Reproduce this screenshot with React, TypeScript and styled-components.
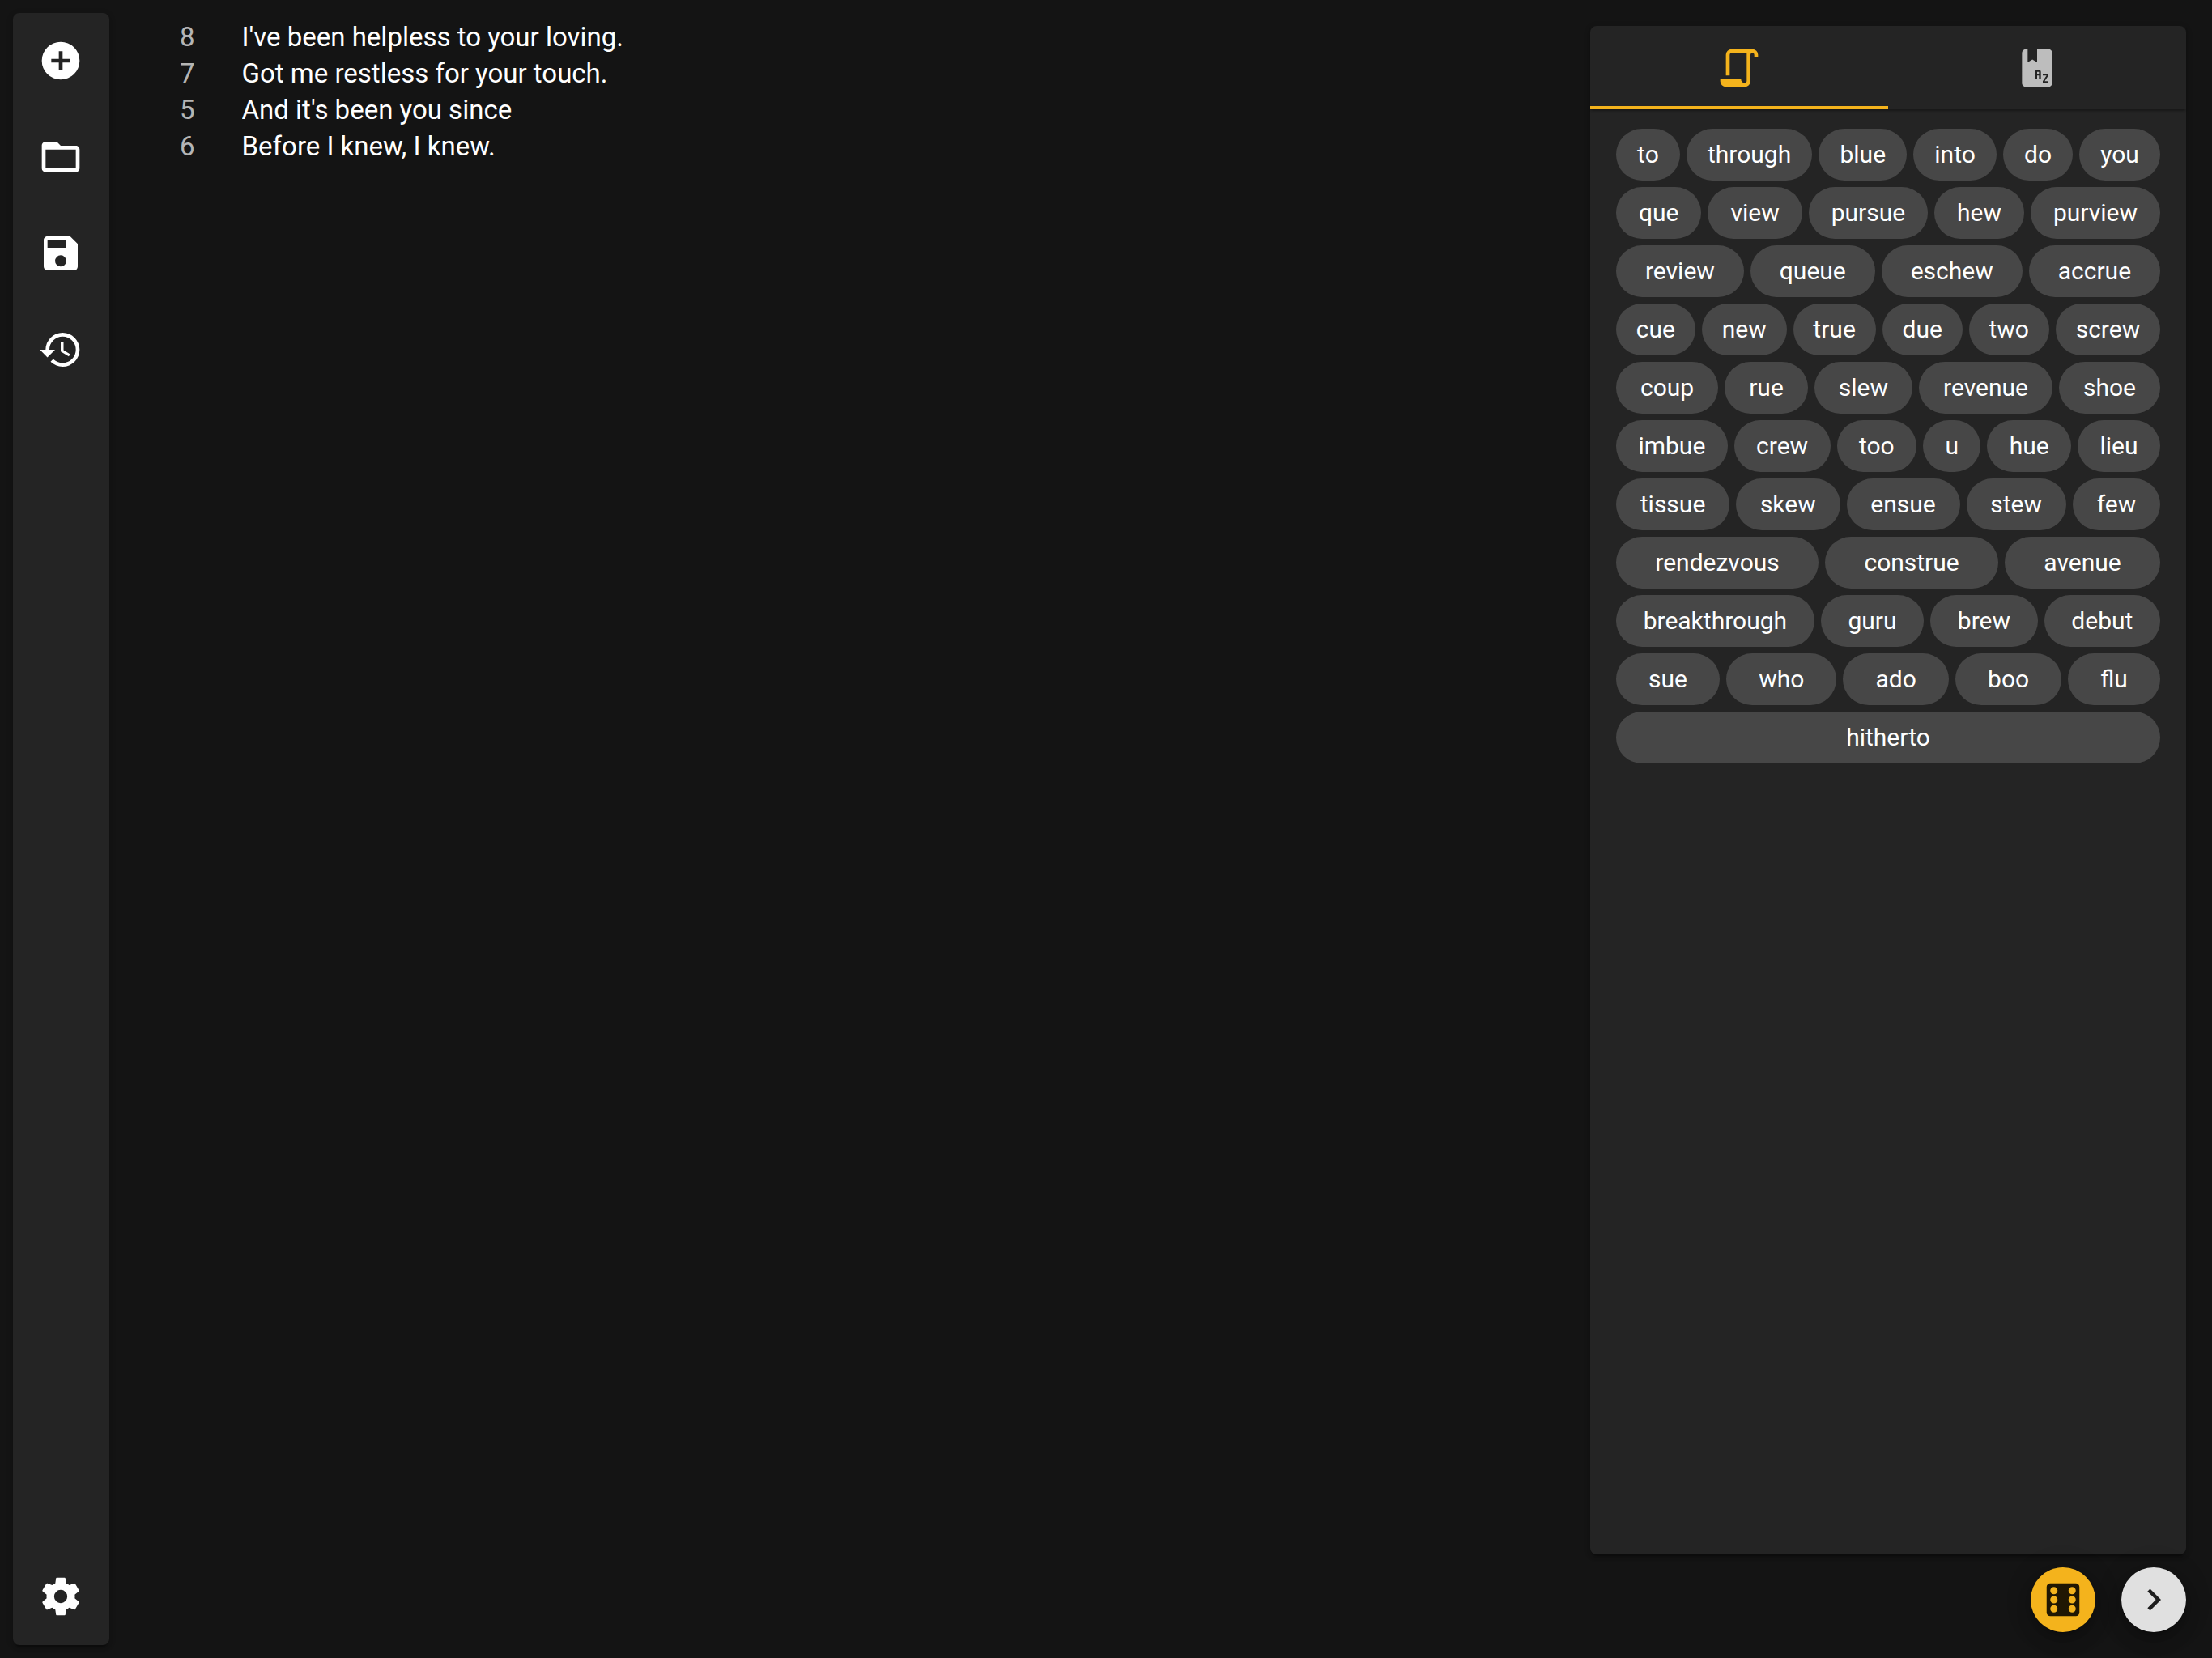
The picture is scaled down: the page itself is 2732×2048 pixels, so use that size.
import React, { useState } from "react";
import styled, { createGlobalStyle } from "styled-components";

const color = {
  background: "#141414",
  surface: "#242424",
  chip: "#474747",
  accent: "#f4b31c",
  neutral: "#e0e0e0",
  text: "#ffffff",
  muted: "rgba(255, 255, 255, 0.7)",
};

const GlobalStyle = createGlobalStyle`
  *, *::before, *::after { box-sizing: border-box; }
  html, body { margin: 0; background: ${color.background}; }
  body, button, textarea { font-family: Roboto, "Liberation Sans", sans-serif; }
  button { border: 0; margin: 0; padding: 0; cursor: pointer; }
`;

const Layout = styled.div`
  display: flex;
  min-height: 100vh;
  color: ${color.text};
  background: ${color.background};
`;

const paper = `
  background: ${color.surface};
  border-radius: 8px;
  box-shadow:
    0 6px 2px -4px rgba(0, 0, 0, 0.2),
    0 4px 4px 0 rgba(0, 0, 0, 0.14),
    0 2px 10px 0 rgba(0, 0, 0, 0.12);
`;

const Sidebar = styled.nav`
  ${paper}
  display: flex;
  flex-direction: column;
  flex: none;
  width: 119px;
  margin: 16px 0 16px 16px;
`;

const SidebarButton = styled.button`
  padding: 31px 32px 32px 31px;
  color: inherit;
  background: none;

  &:last-child {
    margin-top: auto;
  }
`;

const Icon = styled.svg<{ $size: number }>`
  display: block;
  width: ${(p) => p.$size}px;
  height: ${(p) => p.$size}px;
  fill: currentColor;
`;

const Editor = styled.main`
  display: flex;
  flex: 1;
  gap: 58px;
  min-width: 0;
  padding: 23px 32px 24px 87px;
  font-size: 33px;
  line-height: 45px;
`;

const SyllableCounts = styled.ol`
  margin: 0;
  padding: 0;
  list-style: none;
  color: ${color.muted};
`;

const LyricsInput = styled.textarea`
  flex: 1;
  min-width: 0;
  padding: 0;
  border: 0;
  outline: 0;
  resize: none;
  color: inherit;
  background: none;
  font-size: inherit;
  line-height: inherit;
`;

const Tools = styled.aside`
  display: flex;
  flex-direction: column;
  flex: 0 0 736px;
  gap: 16px;
  margin: 32px 32px 32px 0;
`;

const Panel = styled.section`
  ${paper}
  flex: 1;
`;

const TabList = styled.div`
  display: flex;
  box-shadow:
    0 4px 2px -2px rgba(0, 0, 0, 0.2),
    0 2px 2px 0 rgba(0, 0, 0, 0.14);
`;

const Tab = styled.button<{ $active: boolean }>`
  display: flex;
  flex: 1;
  align-items: center;
  justify-content: center;
  height: 103px;
  background: none;
  color: ${(p) => (p.$active ? color.accent : color.muted)};
  box-shadow: ${(p) => (p.$active ? `inset 0 -4px ${color.accent}` : "none")};
`;

const WordList = styled.div`
  display: flex;
  flex-wrap: wrap;
  gap: 8px;
  padding: 24px 32px;
`;

const WordChip = styled.button`
  flex: 1 0 auto;
  height: 64px;
  padding: 0 24px;
  border-radius: 32px;
  color: inherit;
  background: ${color.chip};
  font-size: 30px;
  line-height: 36px;

  &:last-child {
    flex-basis: 100%;
  }
`;

const Actions = styled.div`
  display: flex;
  justify-content: flex-end;
  gap: 32px;
`;

const RoundButton = styled.button<{ $background: string }>`
  display: flex;
  align-items: center;
  justify-content: center;
  width: 80px;
  height: 80px;
  border-radius: 50%;
  color: rgba(0, 0, 0, 0.87);
  background: ${(p) => p.$background};
  box-shadow:
    0 6px 10px -2px rgba(0, 0, 0, 0.2),
    0 12px 20px 0 rgba(0, 0, 0, 0.14),
    0 2px 36px 0 rgba(0, 0, 0, 0.12);
`;

const icons = {
  add: "M17 13h-4v4h-2v-4H7v-2h4V7h2v4h4M12 2a10 10 0 0 0-10 10 10 10 0 0 0 10 10 10 10 0 0 0 10-10A10 10 0 0 0 12 2Z",
  folder:
    "M20 18H4V8h16m0-2h-8l-2-2H4c-1.11 0-2 .89-2 2v12a2 2 0 0 0 2 2h16a2 2 0 0 0 2-2V8c0-1.11-.9-2-2-2Z",
  save: "M15 9H5V5h10m-3 14a3 3 0 0 1-3-3 3 3 0 0 1 3-3 3 3 0 0 1 3 3 3 3 0 0 1-3 3m5-16H5c-1.11 0-2 .9-2 2v14a2 2 0 0 0 2 2h14a2 2 0 0 0 2-2V7l-4-4Z",
  history:
    "M13.5 8H12v5l4.28 2.54.72-1.21-3.5-2.08V8M13 3a9 9 0 0 0-9 9H1l3.96 4.03L9 12H6a7 7 0 0 1 7-7 7 7 0 0 1 7 7 7 7 0 0 1-7 7c-1.93 0-3.68-.79-4.94-2.06l-1.42 1.42A8.9 8.9 0 0 0 13 21a9 9 0 0 0 9-9 9 9 0 0 0-9-9",
  settings:
    "M12,15.5A3.5,3.5 0 0,1 8.5,12A3.5,3.5 0 0,1 12,8.5A3.5,3.5 0 0,1 15.5,12A3.5,3.5 0 0,1 12,15.5M19.43,12.97C19.47,12.65 19.5,12.33 19.5,12C19.5,11.67 19.47,11.34 19.43,11L21.54,9.37C21.73,9.22 21.78,8.95 21.66,8.73L19.66,5.27C19.54,5.05 19.27,4.96 19.05,5.05L16.56,6.05C16.04,5.66 15.5,5.32 14.87,5.07L14.5,2.42C14.46,2.18 14.25,2 14,2H10C9.75,2 9.54,2.18 9.5,2.42L9.13,5.07C8.5,5.32 7.96,5.66 7.44,6.05L4.95,5.05C4.73,4.96 4.46,5.05 4.34,5.27L2.34,8.73C2.21,8.95 2.27,9.22 2.46,9.37L4.57,11C4.53,11.34 4.5,11.67 4.5,12C4.5,12.33 4.53,12.65 4.57,12.97L2.46,14.63C2.27,14.78 2.21,15.05 2.34,15.27L4.34,18.73C4.46,18.95 4.73,19.03 4.95,18.95L7.44,17.94C7.96,18.34 8.5,18.68 9.13,18.93L9.5,21.58C9.54,21.82 9.75,22 10,22H14C14.25,22 14.46,21.82 14.5,21.58L14.87,18.93C15.5,18.67 16.04,18.34 16.56,17.94L19.05,18.95C19.27,19.03 19.54,18.95 19.66,18.73L21.66,15.27C21.78,15.05 21.73,14.78 21.54,14.63L19.43,12.97Z",
  script:
    "M15 20a1 1 0 0 0 1-1V4H8a1 1 0 0 0-1 1v11H5V5a3 3 0 0 1 3-3h11a3 3 0 0 1 3 3v1h-2V5a1 1 0 0 0-1-1 1 1 0 0 0-1 1v14a3 3 0 0 1-3 3H5a3 3 0 0 1-3-3v-1h11a2 2 0 0 0 2 2Z",
  dictionary:
    "M5.81 2C4.83 2.09 4 3 4 4v16c0 1.05.95 2 2 2h12c1.05 0 2-.95 2-2V4c0-1.11-.9-2-2-2h-6v7L9.5 7.5 7 9V2H5.81M12 13h1a1 1 0 0 1 1 1v4h-1v-2h-1v2h-1v-4a1 1 0 0 1 1-1m0 1v1h1v-1h-1m3 1h3v1l-2 3h2v1h-3v-1l2-3h-2v-1Z",
  dice: "M5 3h14a2 2 0 0 1 2 2v14a2 2 0 0 1-2 2H5a2 2 0 0 1-2-2V5a2 2 0 0 1 2-2m2 2a2 2 0 1 0 0 4 2 2 0 0 0 0-4m10 0a2 2 0 1 0 0 4 2 2 0 0 0 0-4M7 10a2 2 0 1 0 0 4 2 2 0 0 0 0-4m10 0a2 2 0 1 0 0 4 2 2 0 0 0 0-4M7 15a2 2 0 1 0 0 4 2 2 0 0 0 0-4m10 0a2 2 0 1 0 0 4 2 2 0 0 0 0-4Z",
  next: "M8.59 16.58 13.17 12 8.59 7.41 10 6l6 6-6 6-1.41-1.42Z",
};

type IconName = keyof typeof icons;

function Glyph({ name, size = 56 }: { name: IconName; size?: number }) {
  return (
    <Icon $size={size} viewBox="0 0 24 24" aria-hidden="true">
      <path fillRule="evenodd" d={icons[name]} />
    </Icon>
  );
}

const menu: { icon: IconName; label: string }[] = [
  { icon: "add", label: "New" },
  { icon: "folder", label: "Open" },
  { icon: "save", label: "Save" },
  { icon: "history", label: "History" },
  { icon: "settings", label: "Settings" },
];

const tabs: { icon: IconName; label: string }[] = [
  { icon: "script", label: "Rhymes" },
  { icon: "dictionary", label: "Dictionary" },
];

const syllables = [8, 7, 5, 6];

const initialLyrics = [
  "I've been helpless to your loving.",
  "Got me restless for your touch.",
  "And it's been you since",
  "Before I knew, I knew.",
].join("\n");

const rhymes = (
  "to through blue into do you que view pursue hew purview review queue eschew accrue " +
  "cue new true due two screw coup rue slew revenue shoe imbue crew too u hue lieu " +
  "tissue skew ensue stew few rendezvous construe avenue breakthrough guru brew debut " +
  "sue who ado boo flu hitherto"
).split(" ");

export default function App() {
  const [lyrics, setLyrics] = useState(initialLyrics);
  const [activeTab, setActiveTab] = useState(0);

  return (
    <>
      <GlobalStyle />
      <Layout>
        <Sidebar aria-label="Main">
          {menu.map((item) => (
            <SidebarButton key={item.icon} type="button" aria-label={item.label}>
              <Glyph name={item.icon} />
            </SidebarButton>
          ))}
        </Sidebar>

        <Editor>
          <SyllableCounts aria-label="Syllables per line">
            {syllables.map((count, line) => (
              <li key={line}>{count}</li>
            ))}
          </SyllableCounts>
          <LyricsInput
            aria-label="Lyrics"
            spellCheck={false}
            value={lyrics}
            onChange={(event) => setLyrics(event.target.value)}
          />
        </Editor>

        <Tools>
          <Panel>
            <TabList role="tablist">
              {tabs.map((tab, index) => (
                <Tab
                  key={tab.icon}
                  type="button"
                  role="tab"
                  aria-label={tab.label}
                  aria-selected={index === activeTab}
                  $active={index === activeTab}
                  onClick={() => setActiveTab(index)}
                >
                  <Glyph name={tab.icon} />
                </Tab>
              ))}
            </TabList>
            <WordList>
              {rhymes.map((word) => (
                <WordChip key={word} type="button">
                  {word}
                </WordChip>
              ))}
            </WordList>
          </Panel>
          <Actions>
            <RoundButton type="button" aria-label="Random word" $background={color.accent}>
              <Glyph name="dice" size={54} />
            </RoundButton>
            <RoundButton type="button" aria-label="Next" $background={color.neutral}>
              <Glyph name="next" size={54} />
            </RoundButton>
          </Actions>
        </Tools>
      </Layout>
    </>
  );
}
